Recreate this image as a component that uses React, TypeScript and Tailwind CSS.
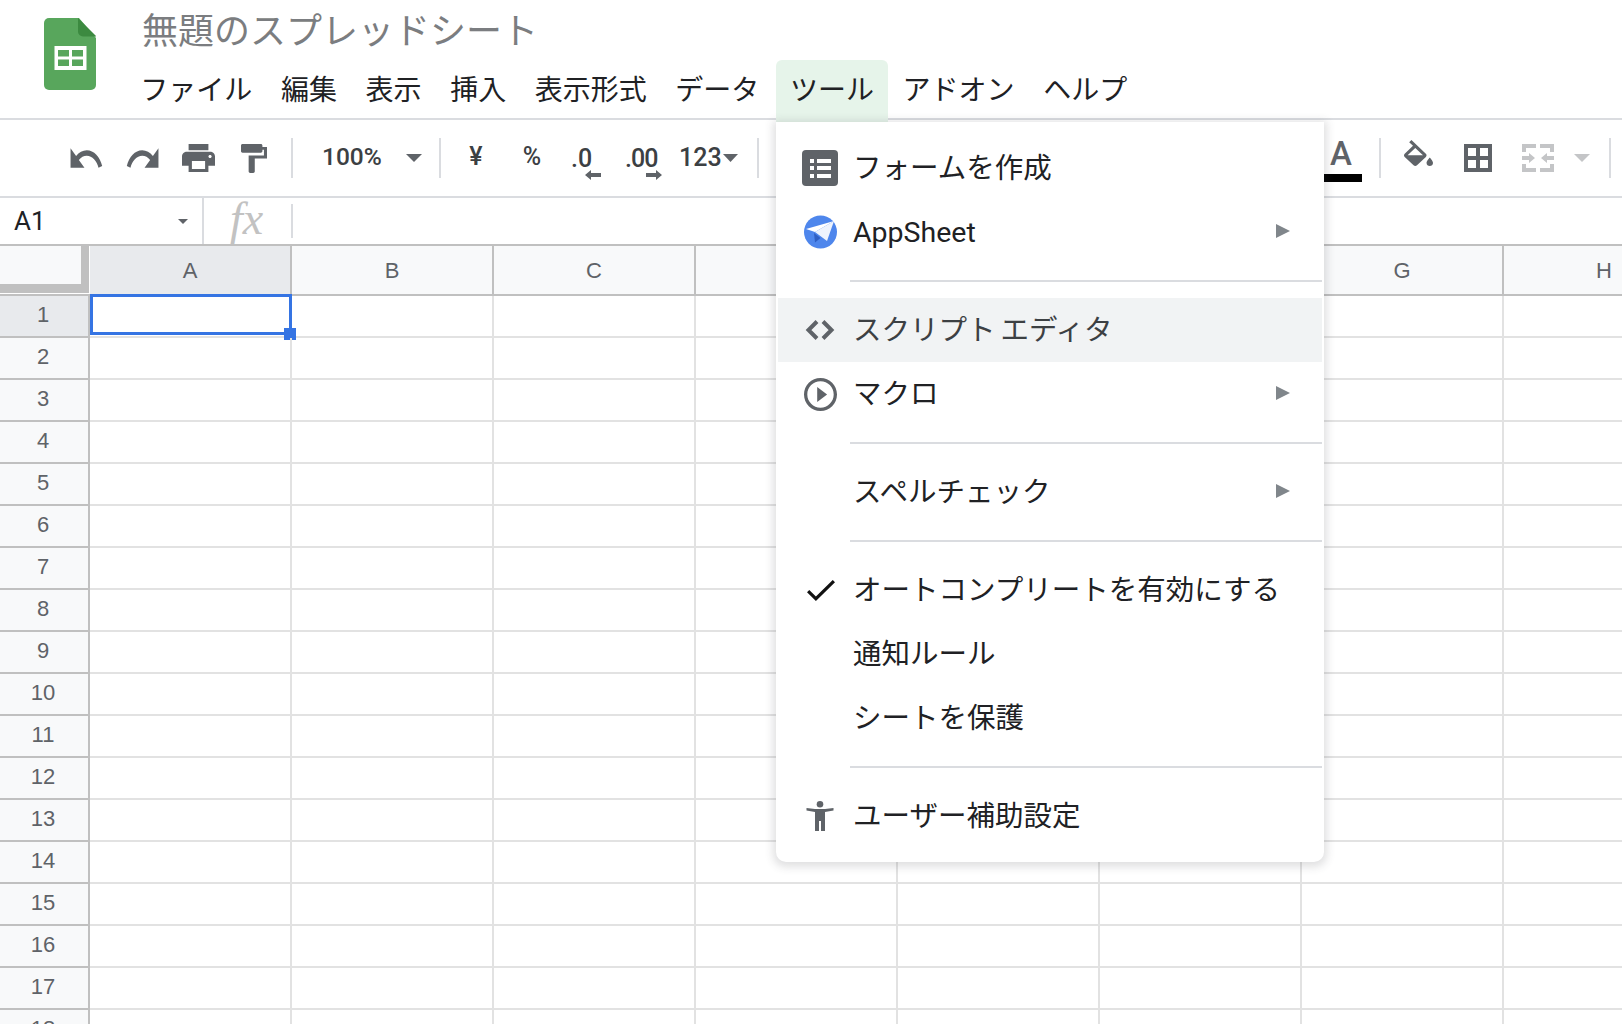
import React from "react";

const G = "#5f6368";

function Ic({ d, w, h, vb = "0 0 24 24", c = G }: { d: string; w: number; h: number; vb?: string; c?: string }) {
  return (
    <svg width={w} height={h} viewBox={vb} preserveAspectRatio="none" className="block shrink-0">
      <path d={d} fill={c} fillRule="evenodd" />
    </svg>
  );
}

function Caret({ w = 16, h = 8, c = G, className = "" }: { w?: number; h?: number; c?: string; className?: string }) {
  return (
    <svg width={w} height={h} viewBox="0 0 16 8" preserveAspectRatio="none" className={"block shrink-0 " + className}>
      <polygon points="0,0 16,0 8,8" fill={c} />
    </svg>
  );
}

function Divider({ className = "" }: { className?: string }) {
  return <div className={"w-[2px] h-[40px] bg-[#dadce0] shrink-0 " + className} />;
}

function Arrow({ dir }: { dir: "l" | "r" }) {
  return (
    <svg width="17" height="10" viewBox="0 0 17 10" className="block">
      {dir === "l" ? (
        <path d="M0 5 L6 0 V3 H16 V7 H6 V10 Z" fill={G} />
      ) : (
        <path d="M17 5 L11 0 V3 H1 V7 H11 V10 Z" fill={G} />
      )}
    </svg>
  );
}

function Logo() {
  return (
    <svg width="52" height="72" viewBox="0 0 52 72" className="block">
      <path d="M5 0 H35 L52 20 V67 a5 5 0 0 1 -5 5 H5 a5 5 0 0 1 -5 -5 V5 a5 5 0 0 1 5 -5 Z" fill="#58a65c" />
      <path d="M34 0 L52 18 V18.500 H39 a5 5 0 0 1 -5 -5 Z" fill="#3c8a40" />
      <rect x="10.500" y="28" width="32" height="24" fill="#fff" />
      <rect x="14" y="32" width="11" height="6.500" fill="#58a65c" />
      <rect x="28" y="32" width="11" height="6.500" fill="#58a65c" />
      <rect x="14" y="41.500" width="11" height="6.500" fill="#58a65c" />
      <rect x="28" y="41.500" width="11" height="6.500" fill="#58a65c" />
    </svg>
  );
}

function FormIcon() {
  return (
    <svg width="36" height="36" viewBox="0 0 36 36" className="block">
      <rect width="36" height="36" rx="4" fill={G} />
      <g fill="#fff">
        <rect x="8" y="9" width="4" height="4" />
        <rect x="15" y="9" width="14" height="4" />
        <rect x="8" y="16" width="4" height="4" />
        <rect x="15" y="16" width="14" height="4" />
        <rect x="8" y="24" width="4" height="4" />
        <rect x="15" y="24" width="14" height="4" />
      </g>
    </svg>
  );
}

function AppSheetIcon() {
  return (
    <svg width="33" height="34" viewBox="0 0 33 34" className="block">
      <circle cx="16.500" cy="17" r="16.500" fill="#4e86ec" />
      <polygon points="2,14 30,6 11,17" fill="#fff" />
      <polygon points="11,17 30,6 23,26" fill="#eef3fd" />
      <polygon points="10,18 16.500,23 11,27.500" fill="#2f5fc4" />
    </svg>
  );
}

function CodeIcon() {
  return (
    <svg width="30" height="20" viewBox="0 0 30 20" className="block">
      <g fill="none" stroke={G} strokeWidth="4">
        <polyline points="12,1.500 3.500,10 12,18.500" />
        <polyline points="18,1.500 26.500,10 18,18.500" />
      </g>
    </svg>
  );
}

function AccessIcon() {
  return (
    <svg width="28" height="30" viewBox="0 0 28 30" className="block">
      <circle cx="14" cy="3.300" r="3.300" fill={G} />
      <path d="M0.500 7 L9 8 H19 L27.500 7 V9.500 L19 11 V30 H15 V20 H13 V30 H9 V11 L0.500 9.500 Z" fill={G} />
    </svg>
  );
}

function SubArrow() {
  return (
    <svg width="14" height="14" viewBox="0 0 14 14" className="block mr-[32px] mb-[2px] shrink-0">
      <polygon points="0,0 14,7 0,14" fill="#80868b" />
    </svg>
  );
}

function Item({
  icon,
  label,
  sub,
  hover,
  iconMl = 26,
}: {
  icon?: React.ReactNode;
  label: string;
  sub?: boolean;
  hover?: boolean;
  iconMl?: number;
}) {
  return (
    <div className={"flex items-center h-[64px] " + (hover ? "bg-[#f1f3f4]" : "")}>
      <div className="w-[75px] shrink-0 flex items-center" style={{ paddingLeft: iconMl }}>
        {icon}
      </div>
      <div className={"flex-1 pt-[2px] text-[28.500px] leading-[40px] whitespace-pre [word-spacing:-2px] " + (hover ? "text-[#3c4043]" : "text-[#202124]")}>{label}</div>
      {sub && <SubArrow />}
    </div>
  );
}

function Sep() {
  return <div className="h-[2px] bg-[#dadce0] ml-[72px] my-[16px]" />;
}

const menus = [
  "ファイル",
  "編集",
  "表示",
  "挿入",
  "表示形式",
  "データ",
  "ツール",
  "アドオン",
  "ヘルプ",
];

const cols = ["A", "B", "C", "D", "E", "F", "G", "H"];
const rows = Array.from({ length: 18 }, (_, i) => i + 1);

export default function App() {
  return (
    <div className="relative w-[1622px] h-[1024px] overflow-hidden bg-white font-['Roboto','Noto_Sans_CJK_JP',sans-serif]">
      {/* Header */}
      <div className="h-[120px] border-b-2 border-[#dadce0] flex">
        <div className="pl-[44px] pt-[18px] w-[126px] shrink-0">
          <Logo />
        </div>
        <div className="flex flex-col">
          <div className="h-[60px] pl-[16px] pt-[2px] text-[36px] leading-[60px] text-[#7b7d80] whitespace-nowrap">無題のスプレッドシート</div>
          <div className="flex items-start h-[62px]">
            {menus.map((m) => (
              <div
                key={m}
                className={
                  "h-[62px] px-[14.300px] flex items-center text-[28px] text-[#202124] whitespace-nowrap rounded-t-[6px] " +
                  (m === "ツール" ? "bg-[#e6f4ea] ml-[2px]" : "")
                }
              >
                {m}
              </div>
            ))}
          </div>
        </div>
      </div>

      {/* Toolbar */}
      <div className="h-[78px] border-b-2 border-[#dadce0] flex items-center pl-[57px] text-[#5f6368]">
        <div className="w-[57px] flex justify-center">
          <Ic w={34} h={24} d="M12.5 8c-2.65 0-5.05.99-6.9 2.6L2 7v9h9l-3.62-3.62c1.39-1.16 3.16-1.88 5.12-1.88 3.54 0 6.55 2.31 7.6 5.5l2.37-.78C21.08 11.03 17.15 8 12.5 8z" vb="1 6 22 11" />
        </div>
        <div className="w-[57px] flex justify-center">
          <Ic w={34} h={24} d="M18.4 10.6C16.55 8.99 14.15 8 11.5 8c-4.65 0-8.58 3.03-9.96 7.22L3.9 16c1.05-3.19 4.05-5.5 7.6-5.5 1.95 0 3.73.72 5.12 1.88L13 16h9V7l-3.6 3.6z" vb="1 6 22 11" />
        </div>
        <div className="w-[54px] flex justify-center">
          <Ic w={33} h={28} d="M19 8H5c-1.66 0-3 1.34-3 3v6h4v4h12v-4h4v-6c0-1.66-1.34-3-3-3zm-3 11H8v-5h8v5zm3-7c-.55 0-1-.45-1-1s.45-1 1-1 1 .45 1 1-.45 1-1 1zm-1-9H6v4h12V3z" vb="2 3 20 18" />
        </div>
        <div className="w-[58px] flex justify-center">
          <Ic w={26} h={29} d="M18 4V3c0-.55-.45-1-1-1H5c-.55 0-1 .45-1 1v4c0 .55.45 1 1 1h12c.55 0 1-.45 1-1V6h1v4H9v11c0 .55.45 1 1 1h2c.55 0 1-.45 1-1v-9h8V4h-3z" vb="4 2 17 20" />
        </div>
        <Divider className="ml-[8px]" />
        <div className="ml-[29px] w-[58px] text-[24.500px] font-medium leading-[30px] text-[#3c4043] -mt-[3px]">100%</div>
        <Caret className="ml-[26px]" />
        <Divider className="ml-[17px]" />
        <div className="ml-[27px] w-[16px] text-[25px] font-medium leading-[30px] text-[#3c4043] flex justify-center -mt-[2px]">¥</div>
        <div className="ml-[39px] w-[18px] text-[25px] font-medium leading-[30px] text-[#3c4043] flex justify-center -mt-[2px]">%</div>
        <div className="ml-[30px] w-[31px] h-[44px] flex flex-col mt-[14px]">
          <div className="text-[25px] font-medium leading-[26px] text-[#3c4043] mt-[3px]">.0</div>
          <div className="self-end -mt-[2px]"><Arrow dir="l" /></div>
        </div>
        <div className="ml-[23px] w-[37px] h-[44px] flex flex-col mt-[14px]">
          <div className="text-[25px] font-medium leading-[26px] text-[#3c4043] tracking-[-1px] mt-[3px]">.00</div>
          <div className="self-end -mt-[2px]"><Arrow dir="r" /></div>
        </div>
        <div className="ml-[17px] w-[40px] text-[25px] font-medium leading-[30px] text-[#3c4043] -mt-[1px]">123</div>
        <Caret w={15} className="ml-[4px]" />
        <Divider className="ml-[19px]" />
        <div className="ml-[561px] w-[42px] h-[76px] flex flex-col items-center pt-[16px] shrink-0">
          <div className="text-[33px] leading-[36px] font-medium text-[#5f6368] h-[38px]">A</div>
          <div className="h-[8px] w-[42px] bg-black" />
        </div>
        <Divider className="ml-[17px]" />
        <div className="ml-[23px] w-[29px] -mt-[10px]">
          <Ic w={29} h={26} d="M16.56 8.94L7.62 0 6.21 1.41l2.38 2.38-5.15 5.15c-.59.59-.59 1.54 0 2.12l5.5 5.5c.29.29.68.44 1.06.44s.77-.15 1.06-.44l5.5-5.5c.59-.58.59-1.53 0-2.12zM5.21 10L10 5.21 14.79 10H5.21zM19 11.5s-2 2.17-2 3.5c0 1.1.9 2 2 2s2-.9 2-2c0-1.33-2-3.5-2-3.5z" vb="3 0 18 17" />
        </div>
        <div className="ml-[31px] w-[28px]">
          <Ic w={28} h={28} vb="0 0 28 28" d="M0 0h28v28H0z M4 4v8h8V4z M16 4v8h8V4z M4 16v8h8v-8z M16 16v8h8v-8z" />
        </div>
        <div className="ml-[30px] w-[32px]">
          <svg width="32" height="28" viewBox="0 0 32 28" className="block">
            <path fill="#c4c5c7" d="M0 0h14v4H4v4H0zM18 0h14v8h-4V4H18zM0 20h4v4h10v4H0zM28 20h4v8H18v-4h10zM0 12h7V9l6 5-6 5v-3H0zM32 12h-7V9l-6 5 6 5v-3h7z" />
          </svg>
        </div>
        <Caret c="#c4c5c7" className="ml-[20px]" />
        <Divider className="ml-[19px]" />
      </div>

      {/* Formula bar */}
      <div className="h-[48px] border-b-2 border-[#c0c0c0] flex items-center">
        <div className="w-[202px] shrink-0 flex items-center justify-between pl-[14px] pr-[14px]">
          <span className="text-[26px] text-[#202124] leading-[30px] -mt-[1px]">A1</span>
          <Caret w={10} h={5} />
        </div>
        <div className="w-[2px] h-[46px] bg-[#dadce0] shrink-0" />
        <div className="w-[87px] shrink-0 pl-[26px] text-[46px] leading-[44px] italic text-[#c2c2c2] font-['Liberation_Serif',serif] -mt-[5px]">fx</div>
        <div className="w-[2px] h-[34px] bg-[#dadce0] shrink-0" />
      </div>

      {/* Column headers */}
      <div className="h-[50px] flex border-b-2 border-[#c0c0c0] bg-[#f8f9fa] font-['Liberation_Sans',sans-serif] text-[22px] text-[#5f6368]">
        <div className="w-[90px] shrink-0 bg-white">
          <div className="w-[89px] h-[47px] bg-[#f8f9fa] border-r-[8px] border-b-[9px] border-[#c0c0c0]" />
        </div>
        {cols.map((c) => (
          <div
            key={c}
            className={
              "w-[202px] shrink-0 border-r-2 border-[#c0c0c0] flex items-center justify-center " +
              (c === "A" ? "bg-[#e8eaed]" : "")
            }
          >
            {c}
          </div>
        ))}
      </div>

      {/* Rows */}
      <div className="font-['Liberation_Sans',sans-serif]">
        {rows.map((r) => (
          <div key={r} className="flex h-[42px] border-b-2 border-[#e2e2e2]">
            <div
              className={
                "relative w-[90px] h-[42px] shrink-0 border-r-2 border-b-2 border-[#c0c0c0] flex items-center justify-center pb-[4px] pr-[2px] text-[22px] text-[#5f6368] " +
                (r === 1 ? "bg-[#e8eaed]" : "bg-[#f8f9fa]")
              }
            >
              {r}
            </div>
            {cols.map((c) => (
              <div key={c} className="relative w-[202px] shrink-0 border-r-2 border-[#e2e2e2]">
                {r === 1 && c === "A" && (
                  <>
                    <div className="absolute left-0 -top-[2px] w-[202px] h-[41px] border-[3px] border-[#3574e3]" />
                    <div className="absolute left-[194px] top-[32px] w-[12px] h-[12px] bg-[#3574e3]" />
                  </>
                )}
              </div>
            ))}
          </div>
        ))}
      </div>

      {/* Dropdown menu */}
      <div className="absolute left-[776px] top-[122px] w-[548px] h-[740px] bg-white rounded-[10px] rounded-t-none px-[2px] pt-[14px] shadow-[0_2px_8px_3px_rgba(60,64,67,0.16)]">
        <Item icon={<FormIcon />} label="フォームを作成" iconMl={24} />
        <Item icon={<AppSheetIcon />} label="AppSheet" sub iconMl={26} />
        <Sep />
        <Item hover iconMl={27} label="スクリプト エディタ" icon={<CodeIcon />} />
        <Item iconMl={26} label="マクロ" sub icon={<Ic w={33} h={33} vb="2 2 20 20" d="M10 16.5l6-4.500-6-4.500v9zM12 2C6.48 2 2 6.48 2 12s4.48 10 10 10 10-4.48 10-10S17.52 2 12 2zm0 18c-4.410 0-8-3.590-8-8s3.590-8 8-8 8 3.590 8 8-3.590 8-8 8z" />} />
        <Sep />
        <Item label="スペルチェック" sub />
        <Sep />
        <Item iconMl={29} label="オートコンプリートを有効にする" icon={<Ic w={28} h={21} c="#111" vb="3.400 5.600 17.600 13.400" d="M9 16.170L4.830 12l-1.420 1.410L9 19 21 7l-1.410-1.410z" />} />
        <Item label="通知ルール" />
        <Item label="シートを保護" />
        <Sep />
        <Item iconMl={28} label="ユーザー補助設定" icon={<AccessIcon />} />
      </div>
    </div>
  );
}
